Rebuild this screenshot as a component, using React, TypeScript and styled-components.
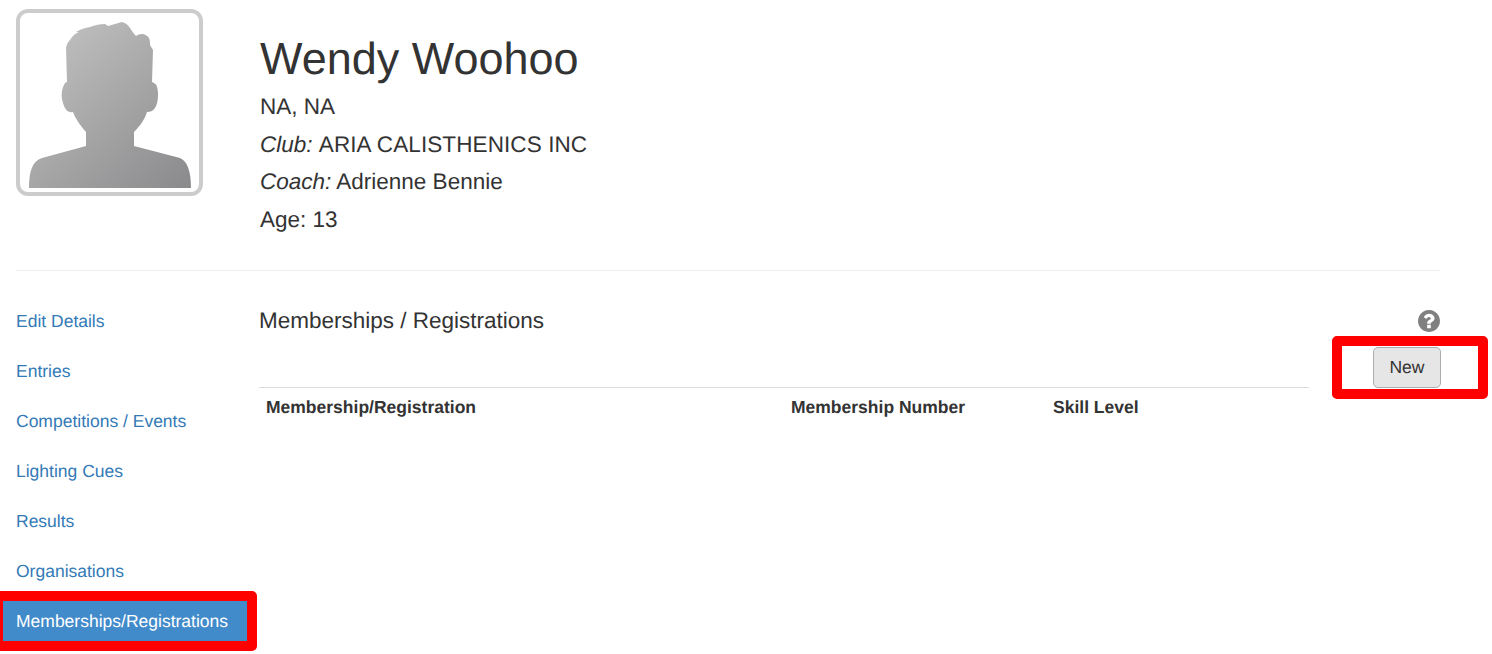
import styled, { createGlobalStyle } from "styled-components";

const GlobalStyle = createGlobalStyle`
  html, body {
    margin: 0;
    padding: 0;
    background: #ffffff;
    color: #333333;
    font-family: "Liberation Sans", Arial, sans-serif;
    font-size: 17.5px;
    line-height: 25px;
    text-rendering: geometricPrecision;
  }
`;

const Page = styled.div`
  position: relative;
  width: 1492px;
  height: 654px;
  overflow: hidden;
  box-sizing: border-box;
  padding: 9px 52px 0 16px;
`;

const Profile = styled.section`
  display: flex;
  height: 261px;
  border-bottom: 1px solid #eeeeee;
`;

const AvatarFrame = styled.div`
  box-sizing: border-box;
  width: 187px;
  height: 187px;
  margin-right: 57px;
  border: 4px solid #cccccc;
  border-radius: 12px;
  background: #ffffff;
  overflow: hidden;
  svg {
    display: block;
  }
`;

const ProfileInfo = styled.div`
  display: flex;
  flex-direction: column;
`;

const Name = styled.h1`
  margin: 26px 0 5px;
  font-size: 45px;
  font-weight: 400;
  line-height: 48px;
`;

const InfoLine = styled.div`
  font-size: 22.5px;
  line-height: 37.5px;
`;

const ClubName = styled.span`
  letter-spacing: 0.1px;
`;

const Body = styled.div`
  display: flex;
  padding-top: 30px;
`;

const SideNav = styled.nav`
  display: flex;
  flex-direction: column;
  width: 244px;
  margin-left: -13px;
`;

const NavLink = styled.a<{ $active?: boolean }>`
  display: block;
  height: 40px;
  margin-bottom: 10px;
  padding: 0 13px;
  line-height: 40px;
  font-size: 17.5px;
  text-decoration: none;
  color: ${(p) => (p.$active ? "#ffffff" : "#337ab7")};
  background: ${(p) => (p.$active ? "#428bca" : "transparent")};
`;

const Content = styled.main`
  flex: 1;
  display: grid;
  grid-template-columns: 1050px 1fr;
  margin-left: 12px;
`;

const SectionTitle = styled.h4`
  margin: 0;
  height: 86px;
  font-size: 22.5px;
  font-weight: 400;
  line-height: 40px;
`;

const ActionColumn = styled.div`
  display: flex;
  flex-direction: column;
  align-items: flex-end;
  padding-top: 9px;
`;

const HelpIcon = styled.svg`
  display: block;
  width: 22px;
  height: 22px;
  margin-bottom: 15px;
  fill: #808080;
`;

const NewButton = styled.button`
  box-sizing: border-box;
  width: 68px;
  height: 41px;
  margin-right: -1px;
  padding: 0;
  border: 1px solid #adadad;
  border-radius: 5px;
  background: #e6e6e6;
  color: #333333;
  font-family: inherit;
  font-size: 17.5px;
  text-rendering: geometricPrecision;
`;

const Table = styled.table`
  width: 1050px;
  border-collapse: collapse;
  border-top: 1px solid #dddddd;
  font-size: 17.5px;
`;

const HeadCell = styled.th<{ $width?: number }>`
  width: ${(p) => (p.$width ? `${p.$width}px` : "auto")};
  padding: 7px;
  text-align: left;
  font-weight: 700;
  line-height: 25px;
`;

const Annotation = styled.div`
  position: absolute;
  box-sizing: border-box;
  border: 10px solid #ff0000;
  border-radius: 5px;
`;

const NavAnnotation = styled(Annotation)`
  left: -7px;
  top: 591px;
  width: 264px;
  height: 60px;
`;

const NewAnnotation = styled(Annotation)`
  left: 1332px;
  top: 336px;
  width: 156px;
  height: 63px;
`;

const navItems = [
  "Edit Details",
  "Entries",
  "Competitions / Events",
  "Lighting Cues",
  "Results",
  "Organisations",
  "Memberships/Registrations",
];

export default function App() {
  return (
    <>
      <GlobalStyle />
      <Page>
        <Profile>
          <AvatarFrame>
            <svg width="179" height="179" viewBox="20 13 179 179">
              <defs>
                <linearGradient id="avatarFill" x1="0.05" y1="0" x2="0.95" y2="1">
                  <stop offset="0" stopColor="#c4c4c4" />
                  <stop offset="1" stopColor="#8b8b8d" />
                </linearGradient>
              </defs>
              <path
                fill="url(#avatarFill)"
                d="M29 188 C29 172 32 161 42 158 L86 146 L86 132 C80 125 75 118 73 112 C69 113 66 111 64 106 C62 101 61 96 62 91 C63 86 65 82 67 82 L66 48 C67 43 69 41 70 40 C72 37 74 34 79 32 L76 32 C81 29 85 28 90 27 C95 25 100 24 105 24 L108 26 L122 22 C126 23 128 25 130 28 C132 31 134 34 136 36 C139 34 141 34 143 34 C146 35 148 36 149 38 C150 40 150 43 150 45 L153 50 L152 82 C155 83 157 85 157 87 C158 90 158 93 158 95 C158 100 157 105 155 108 C153 111 150 112 147 112 C145 119 140 126 134 132 L134 146 L180 158 C187 161 191 170 191 188 Z"
              />
            </svg>
          </AvatarFrame>
          <ProfileInfo>
            <Name>Wendy Woohoo</Name>
            <InfoLine>NA, NA</InfoLine>
            <InfoLine>
              <em>Club:</em> <ClubName>ARIA CALISTHENICS INC</ClubName>
            </InfoLine>
            <InfoLine>
              <em>Coach:</em> Adrienne Bennie
            </InfoLine>
            <InfoLine>Age: 13</InfoLine>
          </ProfileInfo>
        </Profile>
        <Body>
          <SideNav>
            {navItems.map((item) => (
              <NavLink key={item} href="#" $active={item === "Memberships/Registrations"}>
                {item}
              </NavLink>
            ))}
          </SideNav>
          <Content>
            <div>
              <SectionTitle>Memberships / Registrations</SectionTitle>
              <Table>
                <thead>
                  <tr>
                    <HeadCell $width={511}>Membership/Registration</HeadCell>
                    <HeadCell $width={248}>Membership Number</HeadCell>
                    <HeadCell>Skill Level</HeadCell>
                  </tr>
                </thead>
              </Table>
            </div>
            <ActionColumn>
              <HelpIcon viewBox="128 128 1536 1536">
                <path d="M1024 1376v-192q0-14-9-23t-23-9h-192q-14 0-23 9t-9 23v192q0 14 9 23t23 9h192q14 0 23-9t9-23zm256-672q0-88-55.5-163t-138.5-116-170-41q-243 0-371 213-15 24 8 42l132 100q7 6 19 6 16 0 25-12 53-67 86-91 34-24 86-24 48 0 85.5 26t37.5 59q0 38-20 63t-68 46q-63 28-115.5 86.5t-52.5 125.5v36q0 14 9 23t23 9h192q14 0 23-9t9-23q0-19 21.5-49.5t54.5-49.5q32-18 49-28.5t46-35 44.5-48 28-60.5 12.5-81zm384 192q0 209-103 385.5t-279.5 279.5-385.5 103-385.5-103-279.5-279.5-103-385.5 103-385.5 279.5-279.5 385.5-103 385.5 103 279.5 279.5 103 385.5z" />
              </HelpIcon>
              <NewButton>New</NewButton>
            </ActionColumn>
          </Content>
        </Body>
        <NavAnnotation />
        <NewAnnotation />
      </Page>
    </>
  );
}
